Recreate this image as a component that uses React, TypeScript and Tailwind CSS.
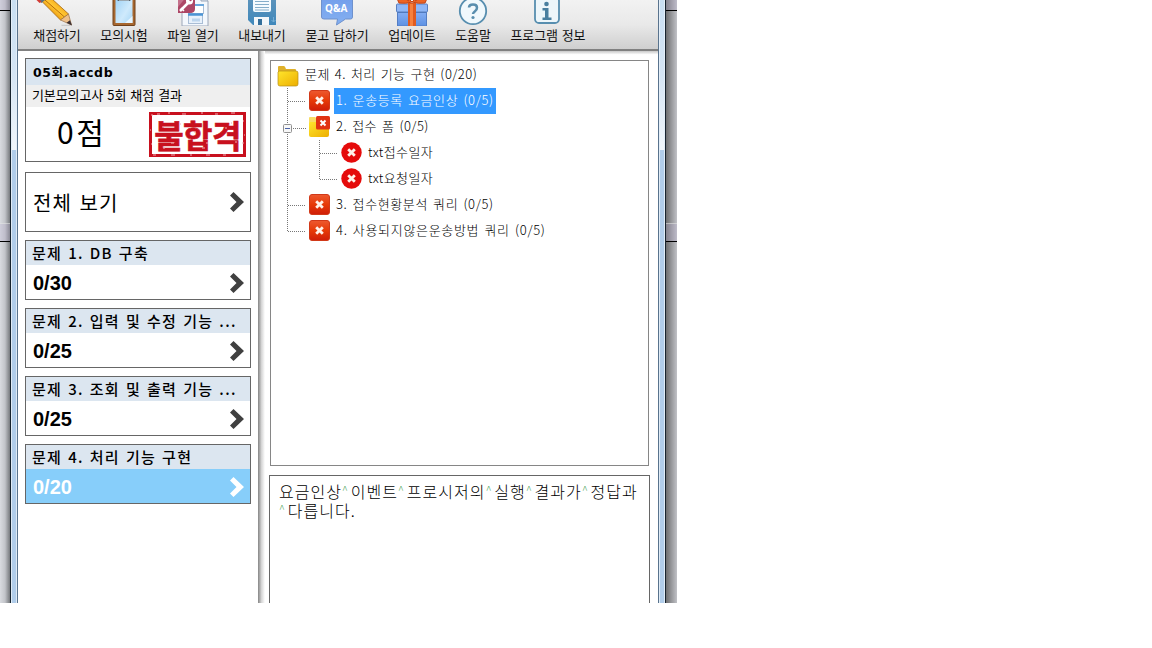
import type { ReactNode } from 'react'
import clsx from 'clsx'

const sans = "font-['Noto_Sans_CJK_KR',sans-serif]"

const PencilIcon = () => (
  <svg width="44" height="27" viewBox="3.500 0 44 27">
    <defs>
      <linearGradient id="pencil" x1="0" y1="1" x2="1" y2="0"><stop offset=".3" stopColor="#e58a00"/><stop offset=".5" stopColor="#ffc835"/><stop offset=".75" stopColor="#f09a0c"/></linearGradient>
    </defs>
    <path d="M30 25.500h9" stroke="#b5b5b5" strokeWidth="1.500" opacity=".6"/>
    <path d="M7-2 14-7 37 14 29 20Z" fill="url(#pencil)" stroke="#a4670f" strokeWidth=".8"/>
    <path d="M10-3 33 17" stroke="#b86d08" strokeWidth="1"/>
    <path d="M29 20 37 14 40 25Z" fill="#efc08a" stroke="#9a7048" strokeWidth=".7"/>
    <path d="m35 22.700 3.500-2.500 2 5.200Z" fill="#3c3033"/>
    <path d="M6-1 10 3 17-3Z" fill="#59717c"/>
    <path d="M4-1h4l2 3-2 1Z" fill="#d23c35"/>
  </svg>
)

const ClipboardIcon = () => (
  <svg width="24" height="27" viewBox="0 0 24 27">
    <defs><linearGradient id="board" x2="1" y2="1"><stop stopColor="#9bd0f5"/><stop offset=".6" stopColor="#cfeafc"/><stop offset="1" stopColor="#a6d6f5"/></linearGradient></defs>
    <rect x="1" y="-8" width="22" height="33.500" rx="1" fill="#a7672f" stroke="#71421c"/>
    <rect x="3.500" y="-4" width="17" height="27" fill="url(#board)"/>
    <path d="m13 23 7.500-7v7Z" fill="#e8f6ff"/>
    <path d="M5-4h14v3q0 2-2 2H7q-2 0-2-2Z" fill="#4d565e"/>
    <path d="M7 .5h10" stroke="#9da9b1"/>
  </svg>
)

const AccessFileIcon = () => (
  <svg width="32" height="27" viewBox="0 0 32 27">
    <path d="M5-6h20l6 7v25H5Z" fill="#f4f8fd" stroke="#9ba6b8"/>
    <path d="M24-4v5h7" fill="#dce6f2" stroke="#9ba6b8"/>
    <rect x="14.500" y="4.500" width="12" height="9" fill="#fff" stroke="#a9bdd5"/>
    <path d="M14 5h13" stroke="#6ba7dc" strokeWidth="2"/>
    <rect x="11.500" y="13.500" width="14" height="10" fill="#e8f1fb" stroke="#a9bdd5"/>
    <path d="M11 14.500h15" stroke="#4c94d4" strokeWidth="2.500"/>
    <path d="M15 20h8" stroke="#bdd5ed" strokeWidth="3"/>
    <path d="M1-4h17v13q0 4-5 4H1Z" fill="#ad4766"/>
    <path d="M1-4h9L1 7Z" fill="#c4718b"/>
    <path d="m3 11 8-8" stroke="#fff" strokeWidth="2.500"/>
    <path d="m4 8 3 3" stroke="#fff" strokeWidth="1.500"/>
    <circle cx="12.500" cy="1" r="3.500" fill="#fff"/>
    <circle cx="13.500" cy="0" r="1.200" fill="#ad4766"/>
  </svg>
)

const SaveIcon = () => (
  <svg width="28" height="27" viewBox="0 0 28 27">
    <defs><linearGradient id="disk" x2="0" y2="1"><stop stopColor="#6496bb"/><stop offset="1" stopColor="#3f88bb"/></linearGradient></defs>
    <path d="M0-8h28v33H5l-5-5Z" fill="url(#disk)"/>
    <path d="M5-4h18V10q0 2-2 2H7q-2 0-2-2Z" fill="#f5fbff"/>
    <path d="M7 1.500h14M7 4.500h14M7 7.500h14M7 10h14" stroke="#85aeca"/>
    <path d="M6 17h15v8H6Z" fill="#f3f7fa"/>
    <path d="M10 19h4v6h-4Z" fill="#346f9b"/>
    <path d="M25.500 17v5m-2-2 2 2 2-2" fill="none" stroke="#75aed5"/>
  </svg>
)

const QnaIcon = () => (
  <div className="relative h-[27px] w-8">
    <svg width="32" height="27" viewBox="0 0 32 27">
      <defs><linearGradient id="qna" x2="0" y2="1"><stop stopColor="#719cea"/><stop offset="1" stopColor="#84b0f1"/></linearGradient></defs>
      <path d="M.5-7h31v24q0 2-2 2h-5l-9 6 1-6H3q-2.500 0-2.500-2Z" fill="url(#qna)" stroke="#6e91cd"/>
    </svg>
    <span className="absolute left-[4px] top-[2px] text-[10px] leading-3 font-bold text-white font-['Open_Sans',sans-serif]">Q&amp;A</span>
  </div>
)

const GiftIcon = () => (
  <svg width="32" height="27" viewBox="0 0 32 27">
    <defs><linearGradient id="gift" x2="0" y2="1"><stop stopColor="#8bb2f5"/><stop offset="1" stopColor="#5d91e3"/></linearGradient></defs>
    <rect x="1.500" y="10" width="29" height="16" fill="url(#gift)" stroke="#547dc3"/>
    <rect x=".5" y="4" width="31" height="8" rx="1" fill="#8fb7f7" stroke="#587fbf"/>
    <path d="M2 12.500h28" stroke="#466fb2" opacity=".7"/>
    <path d="M12 3h8v23h-8Z" fill="#df5b20"/>
    <path d="M14 4h3v22h-3Z" fill="#f7803d"/>
    <path d="M16 2Q8-7 2-4q-1 5 1 7 7 1 13-1Q24-7 30-4q1 5-1 7-7 1-13-1Z" fill="#ed6424" stroke="#bf451b"/>
    <path d="M5-1q5-1 8 2M27-1q-5-1-8 2" stroke="#bf451b" fill="none"/>
  </svg>
)

const HelpIcon = () => (
  <svg width="30" height="27" viewBox="0 0 30 27">
    <circle cx="15" cy="11" r="13.200" fill="#f0f8fc" stroke="#578eaf" strokeWidth="1.800"/>
    <path d="M11 7.500q0-3 4-3t4 3.200q0 2-2 3.500t-2 2.800" fill="none" stroke="#598eae" strokeWidth="2.500"/>
    <circle cx="15" cy="17.500" r="1.600" fill="#598eae"/>
  </svg>
)

const InfoIcon = () => (
  <svg width="28" height="27" viewBox="1 0 28 27">
    <rect x="2" y="-3" width="24" height="26" rx="4" fill="#edf6fa" stroke="#578eaf" strokeWidth="1.800"/>
    <circle cx="13.500" cy="4" r="2.300" fill="#497f9f"/>
    <path d="M9.500 8h6v9.500h3V20h-9v-2.500h2.500v-7H9.500Z" fill="#497f9f"/>
  </svg>
)

const tools: { label: string; width: string; icon: ReactNode }[] = [
  { label: '채점하기', width: 'w-[48px]', icon: <PencilIcon /> },
  { label: '모의시험', width: 'w-[48px]', icon: <ClipboardIcon /> },
  { label: '파일 열기', width: 'w-[52px]', icon: <AccessFileIcon /> },
  { label: '내보내기', width: 'w-[48px]', icon: <SaveIcon /> },
  { label: '묻고 답하기', width: 'w-[64px]', icon: <QnaIcon /> },
  { label: '업데이트', width: 'w-[48px]', icon: <GiftIcon /> },
  { label: '도움말', width: 'w-[36px]', icon: <HelpIcon /> },
  { label: '프로그램 정보', width: 'w-[76px]', icon: <InfoIcon /> },
]

function Toolbar() {
  return (
    <div className="h-[51px] shrink-0 border-b-2 border-[#808080] bg-gradient-to-b from-[#f2f2f2] via-[#e9e9e9] to-[#cfcfcf] pl-[15px] flex gap-[19px]">
      {tools.map(t => (
        <div key={t.label} className={clsx('flex flex-col items-center shrink-0', t.width)}>
          <div className="h-[26px] overflow-hidden shrink-0">{t.icon}</div>
          <span className="text-[13px] leading-[17px] tracking-[-0.1px] [word-spacing:1px] whitespace-nowrap text-[#111]">{t.label}</span>
        </div>
      ))}
    </div>
  )
}

const Chevron = ({ light }: { light?: boolean }) => (
  <svg width="14" height="20" viewBox="0 0 14 20" className="shrink-0">
    <path d="m3.500 0 10.500 10L3.500 20 0 16.500 6.500 10 0 3.500Z" fill={light ? '#fff' : '#404040'}/>
  </svg>
)

const sections = [
  { title: '문제 1. DB 구축', score: '0/30' },
  { title: '문제 2. 입력 및 수정 기능 ...', score: '0/25' },
  { title: '문제 3. 조회 및 출력 기능 ...', score: '0/25' },
  { title: '문제 4. 처리 기능 구현', score: '0/20', active: true },
]

function Stamp() {
  return (
    <div className="relative w-[97px] h-[45px] border-[3px] border-[#c8101e] flex items-center justify-center">
      <span className="text-[32px] leading-[39px] tracking-[-0.6px] font-bold text-[#c8101e] [-webkit-text-stroke:0.6px_#c8101e] whitespace-nowrap">불합격</span>
      <svg className="absolute -left-[3px] -top-[3px]" width="97" height="45" viewBox="0 0 97 45">
        <path d="M2 3h2M8 2h3M19 1h2M33 2h4M52 1h2M66 2h3M82 1h4M94 9h1M95 23h1M93 31h2M4 43h3M22 43h4M41 43h2M57 43h4M74 43h3M1 18h1M2 32h1M13 15h2M22 31h3M31 12h1M45 20h2M57 31h2M76 16h2M86 30h2M14 36h2M53 36h3M82 11h1" stroke="#f0aab0"/>
      </svg>
    </div>
  )
}

function Sidebar() {
  return (
    <div className="w-[240px] shrink-0 pl-[7px] pt-[7px] flex flex-col">
      <div className="w-[226px] h-[104px] border border-[#666] shrink-0">
        <div className="h-[26px] bg-[#dae5f0] pl-[7px] text-[12.5px] leading-[27px] tracking-[0.6px] font-bold font-['DejaVu_Sans','Noto_Sans_CJK_KR',sans-serif]">05회.accdb</div>
        <div className="h-[22px] bg-[#efefef] pl-[6px] text-[13px] leading-[20px] tracking-[-0.1px] [word-spacing:1.3px] whitespace-nowrap">기본모의고사 5회 채점 결과</div>
        <div className="h-[54px] flex items-center justify-between pl-[31px] pr-[4px]">
          <span className="text-[30px] leading-[48px] h-[54px] tracking-[2.5px]">0점</span>
          <Stamp />
        </div>
      </div>
      <div className="mt-[10px] w-[226px] h-[60px] border border-[#666] shrink-0 flex items-center justify-between pl-[7px] pr-[6px]">
        <span className="pt-[2px] text-[20px] tracking-[1.1px] [word-spacing:2px]">전체 보기</span>
        <Chevron />
      </div>
      {sections.map(s => (
        <div key={s.title} className="mt-[8px] w-[226px] h-[60px] border border-[#666] shrink-0">
          <div className="h-[24px] bg-[#dce6f0] pl-[6px] text-[15px] leading-[23px] tracking-[1.3px] [word-spacing:1.3px] font-medium whitespace-nowrap">{s.title}</div>
          <div className={clsx('h-[34px] flex items-center justify-between pl-[7px] pr-[6px]', s.active && 'bg-[#87cefa] text-white')}>
            <span className="pt-[2px] text-[20px] leading-[32px] font-bold font-['Liberation_Sans',sans-serif]">{s.score}</span>
            <span className="pt-px"><Chevron light={s.active} /></span>
          </div>
        </div>
      ))}
    </div>
  )
}

const FailIcon = ({ round }: { round?: boolean }) => (
  <svg width="21" height="21" viewBox="0 0 21 21" className="shrink-0">
    <defs><linearGradient id="fail" x2="0" y2="1"><stop stopColor="#ed5930"/><stop offset=".5" stopColor="#e63a08"/><stop offset="1" stopColor="#cf1d08"/></linearGradient></defs>
    {round
      ? <circle cx="10.500" cy="10.500" r="10.200" fill="#e50b0b"/>
      : <rect x=".5" y=".5" width="20" height="20" rx="2.500" fill="url(#fail)" stroke="#d13919"/>}
    <path d="m7.200 7.200 6.600 6.600m0-6.600-6.600 6.600" stroke="#fff2ea" strokeWidth="2.800"/>
  </svg>
)

const FolderIcon = ({ failed }: { failed?: boolean }) => (
  <svg width="22" height="22" viewBox="0 0 22 22" className={clsx('shrink-0', failed ? '-ml-px' : '-ml-px mr-px')}>
    <defs><linearGradient id="folder" x2="1" y2="1"><stop stopColor="#ffe52c"/><stop offset="1" stopColor="#edae00"/></linearGradient></defs>
    <path d="M1 19V2q0-1 1-1h5q1 0 2 3h9q1 0 1 1v14Z" fill={failed ? '#f8dc65' : '#dfb12a'}/>
    <path d="M2 6h17q2 0 2 2v11q0 2-2 2H3q-2 0-2-2V7Z" fill="url(#folder)" stroke={failed ? 'none' : '#b58c17'} strokeWidth=".7"/>
    {failed && <>
      <rect x="8" y="0" width="14" height="13.500" rx="1.500" fill="#e13312"/>
      <path d="m12.500 4.500 5 5m0-5-5 5" stroke="#fff" strokeWidth="2"/>
    </>}
  </svg>
)

type Row = { text: string; depth: 0 | 1 | 2; icon: ReactNode; tracking: string; selected?: boolean }

const rows: Row[] = [
  { text: '문제 4. 처리 기능 구현 (0/20)', depth: 0, icon: <FolderIcon />, tracking: 'tracking-[0.44px]' },
  { text: '1. 운송등록 요금인상 (0/5)', depth: 1, icon: <FailIcon />, tracking: 'tracking-[0.6px]', selected: true },
  { text: '2. 접수 폼 (0/5)', depth: 1, icon: <FolderIcon failed />, tracking: 'tracking-[0.45px]' },
  { text: 'txt접수일자', depth: 2, icon: <FailIcon round />, tracking: 'tracking-[0.4px]' },
  { text: 'txt요청일자', depth: 2, icon: <FailIcon round />, tracking: 'tracking-[0.4px]' },
  { text: '3. 접수현황분석 쿼리 (0/5)', depth: 1, icon: <FailIcon />, tracking: 'tracking-[0.6px]' },
  { text: '4. 사용되지않은운송방법 쿼리 (0/5)', depth: 1, icon: <FailIcon />, tracking: 'tracking-[0.68px]' },
]

const indent = { 0: 'pl-[7px]', 1: 'pl-[38px]', 2: 'pl-[70px]' }

function Tree() {
  return (
    <div className="relative ml-[5px] w-[379px] h-[406px] shrink-0 border border-[#868686] pt-[1px]">
      {/* connector lines between tree nodes */}
      <svg className="absolute left-0 top-0" width="70" height="180" viewBox="0 0 70 180">
        <g stroke="#777" strokeDasharray="1 1" fill="none">
          <path d="M16.500 27v144M17 40.500h18M22 67.500h13M17 144.500h18M17 170.500h18M48.500 79v40M49 92.500h18M49 118.500h18"/>
        </g>
        <rect x="12.500" y="63.500" width="8" height="8" rx="1" fill="#f7f7f7" stroke="#919191"/>
        <path d="M14 67.500h5" stroke="#4b63a7"/>
      </svg>
      {rows.map(r => (
        <div key={r.text} className={clsx('h-[26px] flex items-center', indent[r.depth])}>
          <span className="h-[22px] flex items-start">
            <span className={clsx(r.depth === 0 ? 'pt-px' : 'pt-0')}>{r.icon}</span>
          </span>
          <span className={clsx(
            'h-[26px] text-[13px] leading-[24px] [word-spacing:1.7px] whitespace-nowrap font-light',
            r.tracking,
            r.depth === 1 ? 'ml-[4px] px-[2px]' : 'ml-[5px]',
            r.depth === 2 && 'pl-px',
            r.selected ? 'bg-[#3399ff] text-white' : 'text-black',
          )}>{r.text}</span>
        </div>
      ))}
    </div>
  )
}

const message = [
  ['요금인상', '이벤트', '프로시저의', '실행', '결과가', '정답과'],
  ['', '다릅니다.'],
]

function Message() {
  return (
    <div className="mt-[9px] ml-[4px] w-[381px] grow border border-b-0 border-[#666] pt-[6px] pl-[9px] text-[16px] leading-[19px] tracking-[1.05px] font-light">
      {message.map(line => (
        <div key={line[1]} className="h-[19px] flex whitespace-nowrap">
          {line.map((word, i) => (
            <span key={word} className="flex">
              {i > 0 && <span className="w-[8.700px] text-[11px] leading-[15px] tracking-normal text-[#4da65a]">^</span>}
              {word}
            </span>
          ))}
        </div>
      ))}
    </div>
  )
}

function Backdrop({ side }: { side: 'left' | 'right' }) {
  return (
    <div className={clsx(
      'shrink-0 flex flex-col',
      side === 'left'
        ? 'w-[10px] bg-gradient-to-r from-[#d9dbe0] via-[#c2c4c9] to-[#777a7e]'
        : 'w-[11px] bg-gradient-to-r from-[#6d6e70] via-[#97989b] to-[#c0c1c6]',
    )}>
      <div className="h-[10px] bg-[#b9b0d0]/30" />
      <div className="h-px bg-black" />
      <div className="h-[213px] border-b border-[#e2e2e4]/60" />
      <div className="h-[17px] bg-[#b9b0d0]/30" />
      <div className="h-px bg-black" />
    </div>
  )
}

const Frame = ({ side }: { side: 'left' | 'right' }) => (
  <div className={clsx('w-[8px] shrink-0 flex flex-col border-[#17232e]', side === 'left' ? 'border-l' : 'border-r')}>
    <div className={clsx('h-[150px] border-[#59738d] bg-gradient-to-b from-[#c9dff2] via-[#d5e5f4] to-[#f0f6fb]', side === 'left' ? 'border-r' : 'border-l')}>
      <div className="h-full border-x border-[#e3eef8]" />
    </div>
    <div className={clsx('grow border-[#59738d] bg-[#b1cdea] flex', side === 'left' ? 'border-r' : 'border-l')}>
      <div className="grow border-x border-[#dfebf6]" />
    </div>
  </div>
)

export default function App() {
  return (
    <div className={clsx('w-[1152px] h-[648px] bg-white overflow-hidden text-black', sans)}>
      <div className="w-[677px] h-[603px] flex overflow-hidden">
        <Backdrop side="left" />
        <Frame side="left" />
        <div className="w-[640px] shrink-0 flex flex-col">
          <Toolbar />
          <div className="grow flex min-h-0">
            <Sidebar />
            <div className="w-[7px] shrink-0 bg-gradient-to-r from-[#858585] via-[#d5d5d5] to-white" />
            <div className="grow flex flex-col">
              <div className="h-[9px] shrink-0 bg-gradient-to-b from-[#c8c8c8] to-white to-40%" />
              <Tree />
              <Message />
            </div>
          </div>
        </div>
        <Frame side="right" />
        <Backdrop side="right" />
      </div>
    </div>
  )
}
